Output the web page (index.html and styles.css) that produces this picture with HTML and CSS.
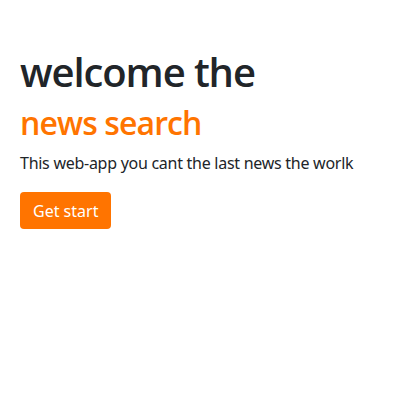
FILE: index.html
```html
<!DOCTYPE html>
<html lang="en">
<head>
<meta charset="utf-8">
<link rel="stylesheet" href="styles.css">
</head>
<body>
<main class="hero">
  <h1 class="title">welcome the</h1>
  <h2 class="subtitle">news search</h2>
  <p class="lead">This web-app you cant the last news the worlk</p>
  <button class="btn">Get start</button>
</main>
</body>
</html>
```
FILE: styles.css
```css
html, body {
  margin: 0;
  padding: 0;
  background: #ffffff;
}
body {
  font-family: "Noto Sans", "Open Sans", sans-serif;
  color: #212529;
}
.hero {
  display: flex;
  flex-direction: column;
  align-items: flex-start;
  padding: 48px 20px 0;
}
.title {
  margin: 0;
  font-family: "Open Sans", "Noto Sans", sans-serif;
  font-size: 40px;
  font-weight: 600;
  line-height: 48px;
  letter-spacing: -1.1px;
}
.subtitle {
  margin: 8px 0 0;
  font-family: "Open Sans", "Noto Sans", sans-serif;
  font-size: 32px;
  font-weight: 600;
  line-height: 38px;
  color: #ff7400;
  letter-spacing: -0.9px;
}
.lead {
  margin: 9px 0 0;
  font-size: 16px;
  line-height: 24px;
  letter-spacing: -0.27px;
}
.btn {
  margin-top: 17px;
  font-family: inherit;
  font-size: 16px;
  line-height: 24px;
  color: #ffffff;
  background: #ff7400;
  border: none;
  border-radius: 4px;
  padding: 7px 13px 6px;
}
```
